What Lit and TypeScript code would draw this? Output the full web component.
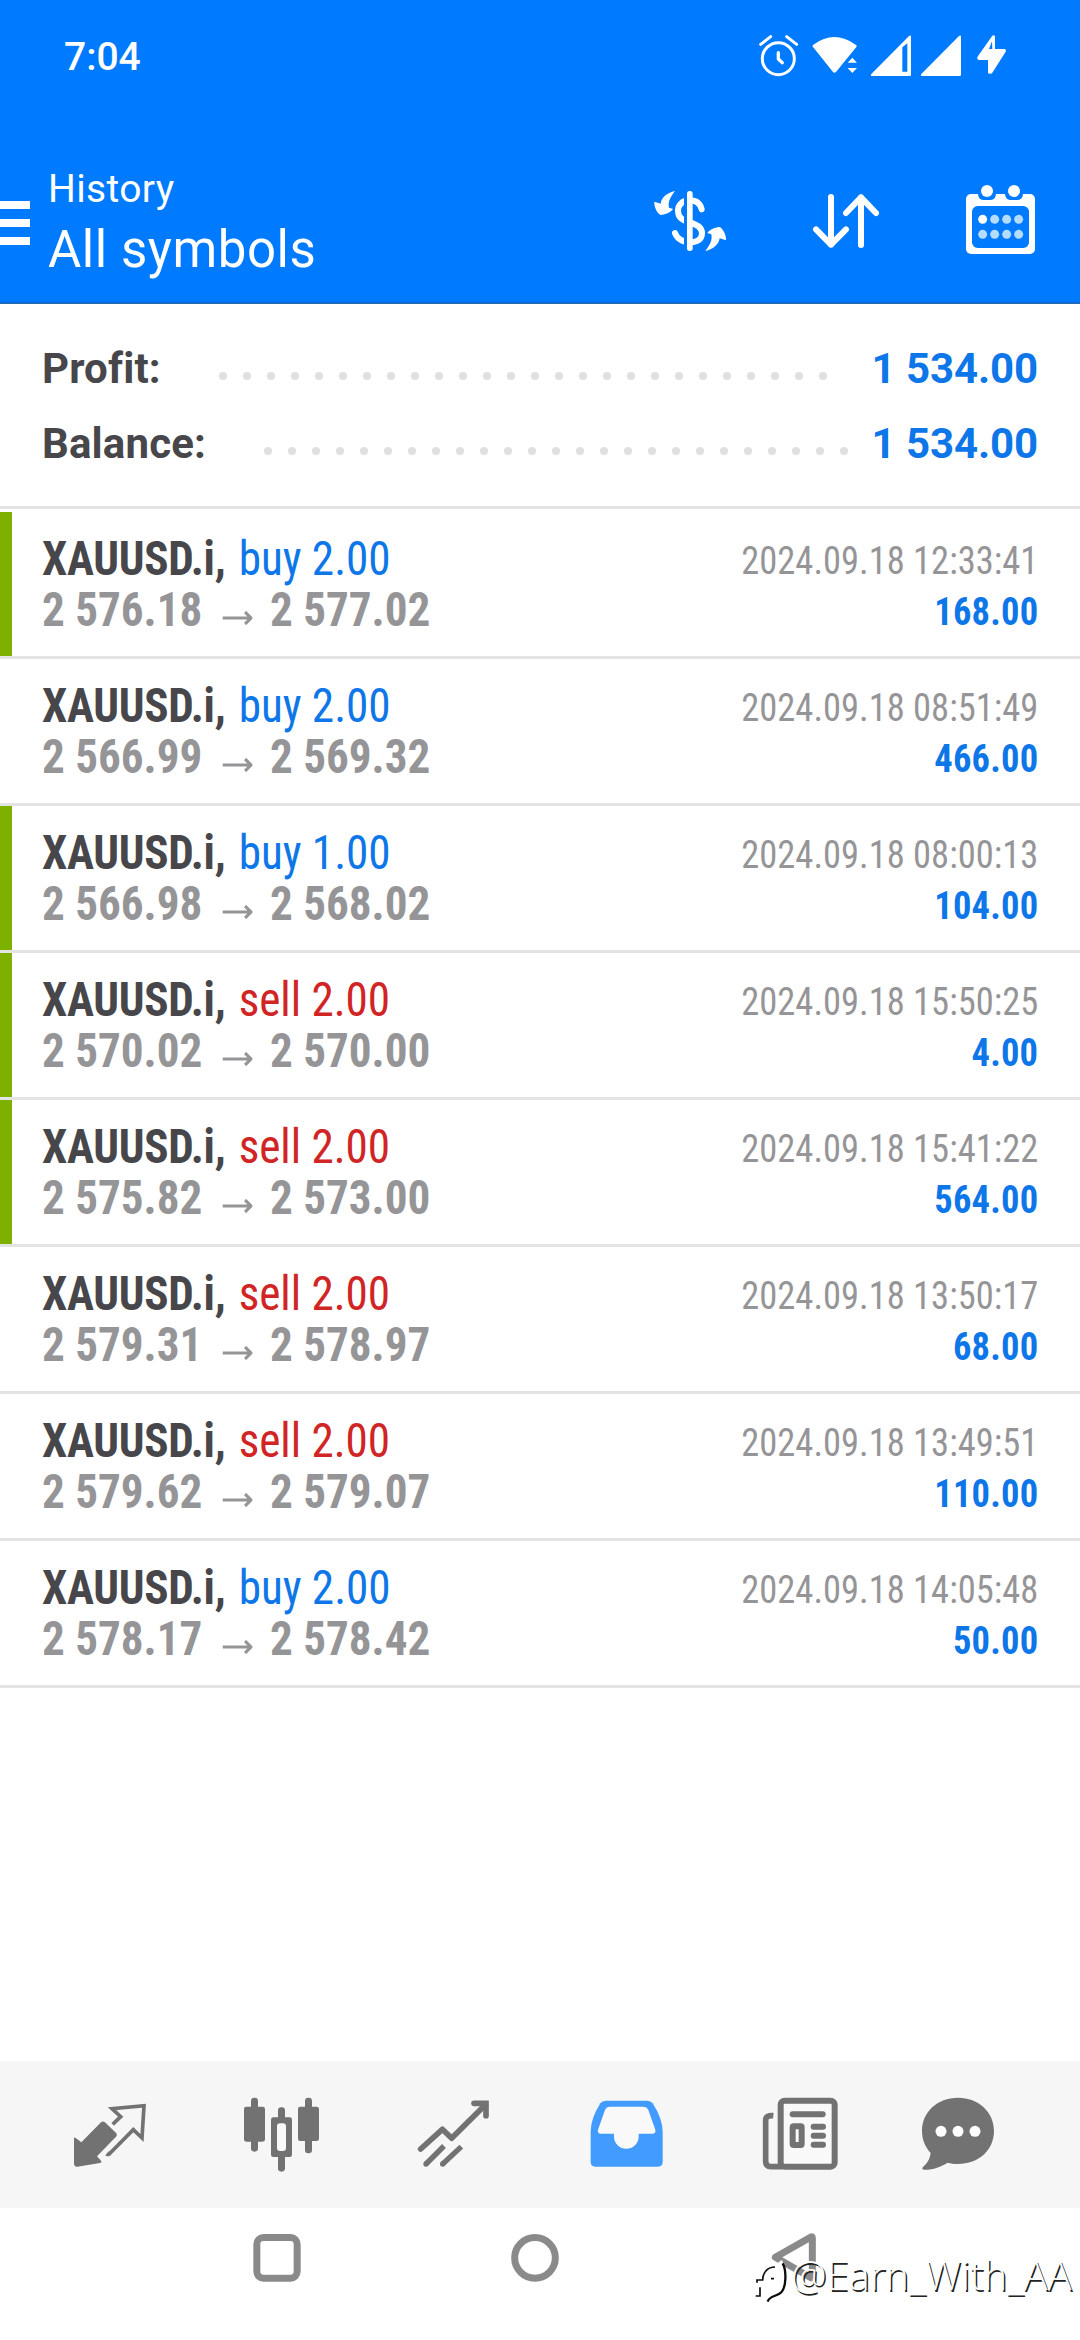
import { LitElement, html, css, svg } from "lit";
import { customElement, property } from "lit/decorators.js";
import { classMap } from "lit/directives/class-map.js";

interface Deal {
  side: "buy" | "sell";
  volume: string;
  open: string;
  close: string;
  time: string;
  profit: string;
  marked: boolean;
}

const deals: Deal[] = [
  { side: "buy", volume: "2.00", open: "2 576.18", close: "2 577.02", time: "2024.09.18 12:33:41", profit: "168.00", marked: true },
  { side: "buy", volume: "2.00", open: "2 566.99", close: "2 569.32", time: "2024.09.18 08:51:49", profit: "466.00", marked: false },
  { side: "buy", volume: "1.00", open: "2 566.98", close: "2 568.02", time: "2024.09.18 08:00:13", profit: "104.00", marked: true },
  { side: "sell", volume: "2.00", open: "2 570.02", close: "2 570.00", time: "2024.09.18 15:50:25", profit: "4.00", marked: true },
  { side: "sell", volume: "2.00", open: "2 575.82", close: "2 573.00", time: "2024.09.18 15:41:22", profit: "564.00", marked: true },
  { side: "sell", volume: "2.00", open: "2 579.31", close: "2 578.97", time: "2024.09.18 13:50:17", profit: "68.00", marked: false },
  { side: "sell", volume: "2.00", open: "2 579.62", close: "2 579.07", time: "2024.09.18 13:49:51", profit: "110.00", marked: false },
  { side: "buy", volume: "2.00", open: "2 578.17", close: "2 578.42", time: "2024.09.18 14:05:48", profit: "50.00", marked: false },
];

const range = (n: number) => Array.from({ length: n }, (_, i) => i);

@customElement("status-bar")
class StatusBar extends LitElement {
  static styles = css`
    :host { display: flex; align-items: center; justify-content: space-between; height: 112px; padding: 0 65px 0 64px; color: #fff; }
    .clock { font: 500 39px/44px Roboto, sans-serif; padding-top: 1px; }
    .icons { display: flex; }
    svg { display: block; height: 52px; }
  `;
  render() {
    return html`
      <span class="clock">7:04</span>
      <div class="icons">
        <svg width="50" viewBox="405 90 150 156" fill="none" stroke="#fff" stroke-linecap="round">
          <circle cx="475" cy="176" r="48" stroke-width="9" />
          <path d="M422 133L452 110M500 110L530 133" stroke-width="9" />
          <path d="M475 158V177L487 188" stroke-width="10" stroke-linejoin="round" />
        </svg>
        <svg width="60" viewBox="555 90 180 156" fill="#fff">
          <path d="M579 141Q576 137 580 134Q643 88 707 134Q712 137 709 141L648 216Q643 221 639 216Z" />
          <path d="M683 188L697 173L711 188ZM683 204H711L697 219Z" />
        </svg>
        <svg width="50" viewBox="735 90 150 156" fill="#fff" fill-rule="evenodd">
          <path d="M754 222L867 108Q873 104 873 110V224Q873 228 869 228H756Q750 227 754 222ZM847 142V215H862V130Z" />
        </svg>
        <svg width="50" viewBox="885 90 150 156" fill="#fff">
          <path d="M904 222L1017 108Q1023 104 1023 110V224Q1023 228 1019 228H906Q900 227 904 222Z" />
        </svg>
        <svg width="50" viewBox="1035 90 150 156" fill="#fff" fill-rule="evenodd">
          <path d="M1117 107Q1124 103 1125 110V147H1154Q1160 149 1157 155L1117 218Q1109 225 1104 218V180H1076Q1070 178 1072 171ZM1116 124L1107 147H1117Z" />
        </svg>
      </div>
    `;
  }
}

@customElement("app-header")
class AppHeader extends LitElement {
  static styles = css`
    :host { display: flex; align-items: flex-start; box-sizing: border-box; height: 192px; color: #fff; font-family: Roboto, sans-serif; border-bottom: 1px solid #2a69ab; box-shadow: inset 0 -2px 1px -1px #0a6cd8; }
    .burger { display: flex; flex-direction: column; gap: 10px; width: 30px; padding-top: 89px; }
    .bar { height: 8px; background: #fff; }
    .titles { flex: 1; padding: 50px 0 0 18px; }
    .section { font-size: 39px; line-height: 54px; letter-spacing: 0.35px; }
    .title { font-size: 51px; line-height: 68px; letter-spacing: 0.55px; }
    .actions { display: flex; gap: 75px; padding: 68px 40px 0 0; }
    svg { display: block; width: 80px; height: 80px; }
  `;
  render() {
    return html`
      <div class="burger"><div class="bar"></div><div class="bar"></div><div class="bar"></div></div>
      <div class="titles">
        <div class="section">History</div>
        <div class="title">All symbols</div>
      </div>
      <div class="actions">
        <svg viewBox="90 540 240 240">
          <path d="M245 628C240 608 226 601 209 601C185 601 174 617 174 632C174 655 190 661 209 667C232 674 246 682 246 700C246 718 232 727 209 727C187 727 170 714 165 699" fill="none" stroke="#fff" stroke-width="18" stroke-linecap="round" />
          <rect x="192" y="580" width="10" height="170" fill="#007aff" />
          <rect x="201" y="573" width="17" height="180" rx="8" fill="#fff" />
          <path d="M165 573C140 578 124 594 122 611L103 605C102 622 112 640 122 645C138 643 152 637 159 627L147 623C143 605 152 590 165 573Z" fill="#fff" />
          <path d="M165 573C140 578 124 594 122 611L103 605C102 622 112 640 122 645C138 643 152 637 159 627L147 623C143 605 152 590 165 573Z" fill="#fff" transform="rotate(180 210.5 663)" />
        </svg>
        <svg viewBox="555 540 240 240" fill="none" stroke="#fff" stroke-width="18" stroke-linecap="round" stroke-linejoin="round">
          <path d="M633 591V734M588 688L633 734L678 688" />
          <path d="M723 735V592M678 639L723 592L768 639" />
        </svg>
        <svg viewBox="1020 540 240 240" fill="#fff">
          <rect x="1038" y="582" width="207" height="180" rx="15" />
          <path d="M1074 580H1128Q1128 600 1112 600H1090Q1074 600 1074 580ZM1155 580H1209Q1209 600 1193 600H1171Q1155 600 1155 580Z" fill="#007aff" />
          <rect x="1056" y="618" width="171" height="126" rx="17" fill="#007aff" />
          <circle cx="1101" cy="573" r="18" /><circle cx="1182" cy="573" r="18" />
          ${range(8).map((i) => svg`<circle cx=${1088 + (i % 4) * 36} cy=${i < 4 ? 658 : 703} r="13.5" fill=${i ? "#b3dcff" : "#fff"} />`)}
        </svg>
      </div>
    `;
  }
}

@customElement("summary-line")
class SummaryLine extends LitElement {
  @property() label = "";
  @property() value = "";
  @property({ type: Number }) dots = 0;
  @property({ type: Number }) tail = 0;
  static styles = css`
    :host { display: flex; align-items: center; height: 75px; font: 700 42px/75px Roboto, sans-serif; color: #47474b; }
    .label { flex: 1; letter-spacing: 0.15px; }
    .leader { display: flex; gap: 16px; padding-top: 14px; }
    .dot { width: 8px; height: 8px; border-radius: 50%; background: #e0e0e1; }
    .value { text-align: right; color: #0d76e8; letter-spacing: -0.1px; }
  `;
  render() {
    return html`
      <span class="label">${this.label}</span>
      <div class="leader">${range(this.dots).map(() => html`<i class="dot"></i>`)}</div>
      <span class="value" style="width:${this.tail}px">${this.value}</span>
    `;
  }
}

@customElement("deal-row")
class DealRow extends LitElement {
  @property({ attribute: false }) deal!: Deal;
  static styles = css`
    :host { display: block; font-family: "Roboto Condensed", Roboto, sans-serif; font-stretch: 75%; white-space: nowrap; }
    .row { display: flex; height: 144px; border-bottom: 3px solid #e4e4e5; }
    .mark { width: 12px; }
    .marked { background: #7eb000; }
    .body { flex: 1; display: flex; justify-content: space-between; padding: 21px 42px 0 30px; }
    .left { transform: scaleX(0.94); transform-origin: 0 0; }
    .line { display: flex; font-size: 48px; line-height: 51px; }
    .symbol { color: #47474b; font-weight: 700; letter-spacing: -0.3px; margin-right: 14px; }
    .prices { color: #959598; font-weight: 700; }
    .buy { color: #0d76e8; }
    .sell { color: #d02425; }
    .right { text-align: right; font-size: 39px; line-height: 51px; padding-top: 3px; transform: scaleX(0.936); transform-origin: 100% 0; }
    .time { color: #959598; }
    .profit { font-weight: 700; color: #0d76e8; letter-spacing: 0.2px; }
    .arrow { width: 32px; height: 14px; margin: 27px 19px 0 21px; }
  `;
  render() {
    const d = this.deal;
    return html`
      <div class="row">
        <div class=${classMap({ mark: true, marked: d.marked })}></div>
        <div class="body">
          <div class="left">
            <div class="line"><span class="symbol">XAUUSD.i,</span><span class=${d.side}>${d.side} ${d.volume}</span></div>
            <div class="line prices">
              <span>${d.open}</span>
              <svg class="arrow" viewBox="0 0 32 14" fill="none" stroke="#959598" stroke-width="3.2"><path d="M0 7H30M24 1L30.5 7L24 13" /></svg>
              <span>${d.close}</span>
            </div>
          </div>
          <div class="right">
            <div class="time">${d.time}</div>
            <div class="profit">${d.profit}</div>
          </div>
        </div>
      </div>
    `;
  }
}

@customElement("tab-bar")
class TabBar extends LitElement {
  static styles = css`
    :host { display: flex; align-items: center; gap: 70px; height: 147px; padding-left: 60px; background: #f6f6f6; }
    svg { display: block; width: 100px; height: 80px; flex: none; }
  `;
  render() {
    const g = "#727272";
    return html`
      <svg viewBox="60 133 300 240">
        <path d="M102 262Q104 258 108 263L124 275L183 215Q189 210 195 215L229 248Q233 253 228 258L171 317L183 330Q186 336 180 337L112 348Q102 349 102 338Z" fill=${g} />
        <path d="M218 221L242 198L216 174L312 165L306 262L280 237L207 311" fill="none" stroke=${g} stroke-width="11" />
        <path d="M196 314L206 302L214 311L208 317H200Z" fill=${g} />
      </svg>
      <svg viewBox="570 133 300 240" fill=${g}>
        <rect x="612" y="168" width="63" height="105" rx="7" /><rect x="633" y="141" width="21" height="162" rx="10" />
        <rect x="774" y="168" width="63" height="103" rx="7" /><rect x="795" y="141" width="21" height="167" rx="10" />
        <rect x="693" y="200" width="63" height="119" rx="7" /><rect x="714" y="170" width="21" height="193" rx="10" />
        <rect x="711" y="218" width="27" height="83" rx="9" fill="#f9f9f9" />
      </svg>
      <svg viewBox="1080 133 300 240" fill="none" stroke=${g} stroke-width="16">
        <path d="M1142 295L1207 236L1235 263L1336 162" stroke-width="17" stroke-linecap="round" stroke-linejoin="round" />
        <path d="M1302 158H1338V195" stroke-width="17" stroke-linecap="round" />
        <path d="M1212 286L1158 340M1264 288L1208 340" />
        <circle cx="1158" cy="340" r="8" fill=${g} stroke="none" /><circle cx="1208" cy="340" r="8" fill=${g} stroke="none" />
      </svg>
      <svg viewBox="30 133 300 240" fill="#429bfe">
        <path d="M137 150H262Q272 150 278 158Q308 204 308 244V334Q308 348 294 348H106Q92 348 92 334V244Q92 204 121 158Q127 150 137 150Z" />
        <path d="M150 168H248Q261 168 265 178L286 237Q288 249 277 249H236V258A37 36 0 0 1 162 258V249H124Q111 249 114 237L135 178Q139 168 150 168Z" fill="#f9f9f9" />
      </svg>
      <svg viewBox="540 133 300 240" fill="none" stroke=${g}>
        <rect x="662" y="150" width="162" height="198" rx="12" stroke-width="18" fill="#f9f9f9" />
        <path d="M640 195Q617 193 617 208V332Q617 348 633 348H670" stroke-width="17" />
        <path d="M698 191H788" stroke-width="18" stroke-linecap="round" />
        <rect x="698" y="227" width="27" height="56" rx="3" stroke-width="18" />
        <path d="M761 228H789M761 255H789M761 282H789" stroke-width="18" stroke-linecap="round" />
      </svg>
      <svg viewBox="1050 133 300 240" fill=${g}>
        <path d="M1194 141C1256 141 1302 184 1302 241C1302 298 1256 340 1194 340C1182 340 1172 338 1163 336C1142 349 1118 358 1091 357Q1084 356 1089 349C1104 336 1110 322 1112 307C1096 289 1086 267 1086 241C1086 184 1132 141 1194 141Z" />
        <circle cx="1143" cy="242" r="16.5" fill="#fff" /><circle cx="1194" cy="242" r="16.5" fill="#fff" /><circle cx="1245" cy="242" r="16.5" fill="#fff" />
      </svg>
    `;
  }
}

@customElement("system-nav")
class SystemNav extends LitElement {
  static styles = css`
    :host { display: flex; position: relative; gap: 199px; box-sizing: border-box; height: 132px; padding: 20px 0 0 247px; background: #fff; }
    .key { display: block; width: 60px; height: 60px; }
    .watermark { position: absolute; left: 750px; top: 40px; display: flex; align-items: flex-start; white-space: nowrap; }
    .logo { display: block; width: 40px; height: 56px; padding: 4px 1px 0 0; flex: none; }
    .handle { font: 300 40px/54px "Open Sans", "Noto Sans", sans-serif; color: #fff; text-shadow: 1.5px 1.5px 0 #222; }
  `;
  render() {
    return html`
      <svg class="key" viewBox="141 84 180 180"><rect x="170.5" y="112.5" width="121" height="122" rx="20" fill="none" stroke="#8a8a8a" stroke-width="21" /></svg>
      <svg class="key" viewBox="918 84 180 180"><circle cx="1005" cy="173.5" r="61" fill="none" stroke="#8a8a8a" stroke-width="21" /></svg>
      <svg class="key" viewBox="75 84 180 180"><path d="M106 172L213 111Q217 109 217 114V232Q217 236 213 233Z" fill="none" stroke="#8a8a8a" stroke-width="21" stroke-linejoin="round" /></svg>
      <div class="watermark">
        <svg class="logo" viewBox="30 156 120 168" fill="none">
          <path d="M48 238H66Q68 200 104 196M90 232H100M45 258H63L56 286H44M120 184C135 205 133 262 118 278C106 291 86 286 80 300" stroke="#fff" stroke-width="13" />
          <path d="M51 248V240H68C69 215 84 201 105 201M93 236H102M60 262V288H47" stroke="#0c0c0c" stroke-width="5" />
          <path d="M128 190C140 212 139 260 124 277C112 290 88 286 83 305" stroke="#0c0c0c" stroke-width="7" />
        </svg>
        <span class="handle">@Earn_With_AA</span>
      </div>
    `;
  }
}

@customElement("app-root")
class AppRoot extends LitElement {
  static styles = css`
    :host { display: flex; flex-direction: column; width: 1080px; height: 2340px; background: #fff; overflow: hidden; }
    .top { background: #007aff; }
    .summary { box-sizing: border-box; height: 205px; padding: 27px 42px 0; border-bottom: 3px solid #e4e4e5; }
    .deals { flex: 1; padding-top: 3px; }
  `;
  render() {
    return html`
      <div class="top"><status-bar></status-bar><app-header></app-header></div>
      <div class="summary">
        <summary-line label="Profit:" value="1 534.00" dots="26" tail="211"></summary-line>
        <summary-line label="Balance:" value="1 534.00" dots="25" tail="190"></summary-line>
      </div>
      <div class="deals">${deals.map((d) => html`<deal-row .deal=${d}></deal-row>`)}</div>
      <tab-bar></tab-bar>
      <system-nav></system-nav>
    `;
  }
}
